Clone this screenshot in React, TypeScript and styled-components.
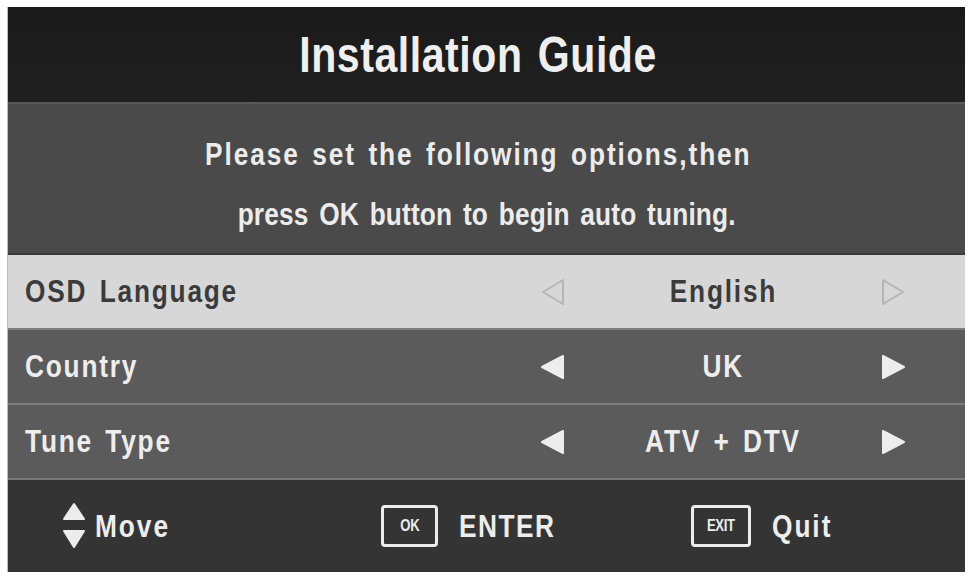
import React from 'react'
import styled, { createGlobalStyle } from 'styled-components'

const GlobalStyle = createGlobalStyle`
  html, body {
    margin: 0;
    padding: 0;
    background: #ffffff;
  }
  body {
    font-family: "Liberation Sans", Arial, sans-serif;
  }
`

// the OSD font is a narrow bold face, squeeze Arial-width glyphs to match
const Narrow = styled.span<{ $origin?: string; $spacing?: number; $shift?: number }>`
  display: inline-block;
  white-space: nowrap;
  transform: translateX(${p => p.$shift ?? 0}px) scaleX(0.82);
  transform-origin: ${p => p.$origin || 'center'};
  letter-spacing: ${p => p.$spacing ?? 2.2}px;
  word-spacing: 4px;
`

const Page = styled.div`
  width: 971px;
  height: 576px;
  padding: 7px 6px 4px 7px;
  box-sizing: border-box;
`

const Panel = styled.div`
  width: 958px;
  height: 565px;
  display: flex;
  flex-direction: column;
  background: #1d1d1d;
  border-left: 1px solid #bdbdbd;
  box-sizing: border-box;
`

const Header = styled.div`
  height: 95px;
  display: flex;
  align-items: center;
  justify-content: center;
  background: linear-gradient(180deg, #1a1a1a 0%, #202020 100%);
  color: #efefef;
  font-size: 50px;
  font-weight: bold;
  box-sizing: border-box;
`

const Band = styled.div`
  height: 151px;
  display: flex;
  flex-direction: column;
  align-items: center;
  padding-top: 20px;
  box-sizing: border-box;
  background: #4a4a4a;
  border-top: 2px solid #5a5a5a;
  color: #ececec;
  font-size: 32px;
  font-weight: bold;
  line-height: 60px;
`

const Row = styled.div<{ $active?: boolean }>`
  height: 75px;
  display: grid;
  grid-template-columns: 1fr 26px 314px 26px;
  align-items: center;
  padding: 0 59px 0 17px;
  box-sizing: border-box;
  background: ${p => (p.$active ? '#d7d7d7' : '#5b5b5b')};
  border-top: 2px solid ${p => (p.$active ? '#3a3a3a' : '#7e7e7e')};
  color: ${p => (p.$active ? '#3b3b3b' : '#ededed')};
  font-size: 32px;
  font-weight: bold;
`

const Label = styled.div``

const Value = styled.div`
  text-align: center;
`

const Arrow = styled.svg`
  display: block;
  width: 26px;
  height: 28px;
`

const Footer = styled.div`
  flex: 1;
  display: grid;
  grid-template-columns: 320px 310px auto;
  align-items: center;
  padding-left: 53px;
  background: #343434;
  border-top: 2px solid #7a7a7a;
  color: #ededed;
  font-size: 32px;
  font-weight: bold;
`

const Hint = styled.div`
  display: flex;
  align-items: center;
`

const KeyBox = styled.div<{ $width: number }>`
  width: ${p => p.$width}px;
  height: 42px;
  box-sizing: border-box;
  border: 3px solid #ededed;
  border-radius: 4px;
  display: flex;
  align-items: center;
  justify-content: center;
  font-size: 16px;
  margin-right: 21px;
`

type Option = { label: string; value: string; active?: boolean }

const options: Option[] = [
  { label: 'OSD Language', value: 'English', active: true },
  { label: 'Country', value: 'UK' },
  { label: 'Tune Type', value: 'ATV + DTV' },
]

const LeftArrow = ({ outline }: { outline?: boolean }) => (
  <Arrow viewBox="0 0 26 28">
    {outline ? (
      <polygon points="23,2 3,14 23,26" fill="none" stroke="#b5b5b5" strokeWidth={2} strokeLinejoin="round" />
    ) : (
      <polygon points="23,3 2,14 23,25" fill="#ededed" stroke="#ededed" strokeWidth={2} strokeLinejoin="round" />
    )}
  </Arrow>
)

const RightArrow = ({ outline }: { outline?: boolean }) => (
  <Arrow viewBox="0 0 26 28">
    {outline ? (
      <polygon points="3,2 23,14 3,26" fill="none" stroke="#b5b5b5" strokeWidth={2} strokeLinejoin="round" />
    ) : (
      <polygon points="3,3 24,14 3,25" fill="#ededed" stroke="#ededed" strokeWidth={2} strokeLinejoin="round" />
    )}
  </Arrow>
)

const UpDown = () => (
  <svg width="26" height="50" viewBox="0 0 26 50" style={{ marginRight: 8 }}>
    <polygon points="13,3 23,18 3,18" fill="#ededed" stroke="#ededed" strokeWidth={2} strokeLinejoin="round" />
    <polygon points="3,30 23,30 13,46" fill="#ededed" stroke="#ededed" strokeWidth={2} strokeLinejoin="round" />
  </svg>
)

const App: React.FC = () => {
  return (
    <>
      <GlobalStyle />
      <Page>
        <Panel>
          <Header>
            <Narrow $spacing={0.7} $shift={-8}>Installation Guide</Narrow>
          </Header>
          <Band>
            <Narrow $spacing={2.35} $shift={-8}>Please set the following options,then</Narrow>
            <Narrow $spacing={0.2}>press OK button to begin auto tuning.</Narrow>
          </Band>
          {options.map(opt => (
            <Row key={opt.label} $active={opt.active}>
              <Label>
                <Narrow $origin="left">{opt.label}</Narrow>
              </Label>
              <LeftArrow outline={opt.active} />
              <Value>
                <Narrow>{opt.value}</Narrow>
              </Value>
              <RightArrow outline={opt.active} />
            </Row>
          ))}
          <Footer>
            <Hint>
              <UpDown />
              <Narrow $origin="left" $spacing={2.4}>Move</Narrow>
            </Hint>
            <Hint>
              <KeyBox $width={57}>
                <Narrow $spacing={0}>OK</Narrow>
              </KeyBox>
              <Narrow $origin="left" $spacing={1.8}>ENTER</Narrow>
            </Hint>
            <Hint>
              <KeyBox $width={60}>
                <Narrow $spacing={-0.5}>EXIT</Narrow>
              </KeyBox>
              <Narrow $origin="left" $spacing={2.4}>Quit</Narrow>
            </Hint>
          </Footer>
        </Panel>
      </Page>
    </>
  )
}

export default App
